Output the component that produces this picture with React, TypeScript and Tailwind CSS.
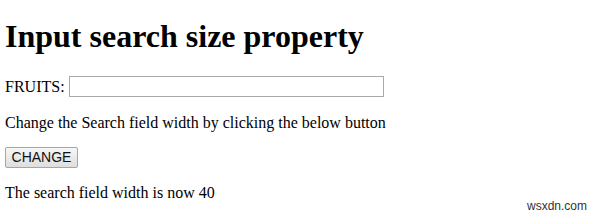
import React from 'react';

const App: React.FC = () => {
    return (
        <div className="relative w-[600px] h-[217px] bg-white overflow-hidden font-['Liberation_Serif',serif] text-black">
            <div className="pl-[5px] pt-[18px]">
                <h1 className="text-[32px] leading-[37px] font-bold">Input search size property</h1>

                <div className="mt-[21px] flex items-center h-[21px]">
                    <span className="text-[16px] leading-[18px]">FRUITS:</span>
                    <input
                        type="search"
                        className="ml-[4px] w-[315px] h-[21px] border border-[#a9a9a9] bg-white outline-none"
                    />
                </div>

                <p className="mt-[17px] text-[16px] leading-[18px]">
                    Change the Search field width by clicking the below button
                </p>

                <button className="mt-[15px] w-[73px] h-[21px] border border-[#a6a6a6] rounded-[2px] bg-gradient-to-b from-[#f7f7f7] to-[#dedede] font-['Liberation_Sans',sans-serif] text-[14px] leading-[19px] text-[#111]">
                    CHANGE
                </button>

                <p className="mt-[15px] text-[16px] leading-[18px]">The search field width is now 40</p>
            </div>

            <span className="absolute left-[527px] top-[199px] font-['Liberation_Sans',sans-serif] text-[12px] leading-[14px] text-[#333]">
                wsxdn.com
            </span>
        </div>
    );
};

export default App;
